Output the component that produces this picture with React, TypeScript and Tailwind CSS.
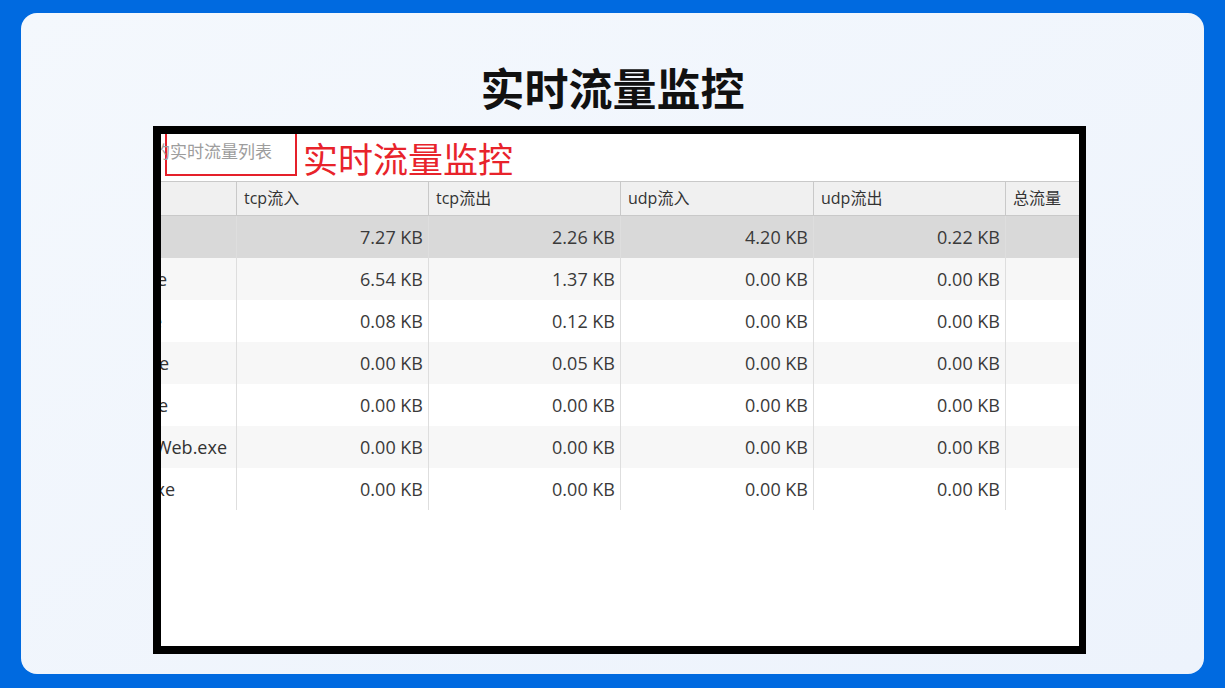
import React from "react";

const cjk = { fontFamily: '"Noto Sans CJK SC", "Noto Sans", sans-serif' };
const table = { fontFamily: '"Open Sans", "Noto Sans CJK SC", sans-serif' };

const headers = ["", "tcp流入", "tcp流出", "udp流入", "udp流出", "总流量"];

// the first column is scrolled off to the left, so only the tail of each name shows
const rows = [
  { name: "", pad: "pr-[69px]", cells: ["7.27 KB", "2.26 KB", "4.20 KB", "0.22 KB"] },
  { name: "chrome.exe", pad: "pr-[69px]", cells: ["6.54 KB", "1.37 KB", "0.00 KB", "0.00 KB"] },
  { name: "lsass.exe", pad: "pr-[74px]", cells: ["0.08 KB", "0.12 KB", "0.00 KB", "0.00 KB"] },
  { name: "clash.exe", pad: "pr-[67px]", cells: ["0.00 KB", "0.05 KB", "0.00 KB", "0.00 KB"] },
  { name: "wechat.exe", pad: "pr-[68px]", cells: ["0.00 KB", "0.00 KB", "0.00 KB", "0.00 KB"] },
  { name: "QQWeb.exe", pad: "pr-[9px]", cells: ["0.00 KB", "0.00 KB", "0.00 KB", "0.00 KB"] },
  { name: "steam.exe", pad: "pr-[61px]", cells: ["0.00 KB", "0.00 KB", "0.00 KB", "0.00 KB"] },
];

const cols = "grid grid-cols-[76px_192px_192px_193px_192px_1fr]";

function Header() {
  return (
    <div className={`${cols} h-[35px] bg-[#f0f0f0] border-y border-[#c9c9c9]`}>
      {headers.map((h, i) => (
        <div
          key={i}
          className="border-r border-[#c9c9c9] last:border-r-0 flex items-center pl-[7px] pb-[1px] text-[16px] text-[#333] whitespace-nowrap overflow-hidden"
        >
          {h}
        </div>
      ))}
    </div>
  );
}

function Row({ name, pad, cells, idx }: { name: string; pad: string; cells: string[]; idx: number }) {
  const bg = idx === 0 ? "bg-[#d9d9d9]" : idx % 2 === 1 ? "bg-[#f7f7f7]" : "bg-white";
  return (
    <div className={`${cols} h-[42px] ${bg}`}>
      <div className={`border-r border-[#dedede] overflow-hidden flex items-center justify-end ${pad}`}>
        <span className="shrink-0 whitespace-nowrap text-[18px] text-[#333]">{name}</span>
      </div>
      {cells.map((c, i) => (
        <div
          key={i}
          className="border-r border-[#dedede] flex items-center justify-end pr-[5px] text-[18px] text-[#3a3a3a]"
        >
          {c}
        </div>
      ))}
      <div />
    </div>
  );
}

export default function App() {
  return (
    <div className="w-[1225px] h-[688px] bg-[#006ae0] pt-[13px] pb-[14px] px-[21px]">
      <div className="h-full rounded-[16px] bg-gradient-to-br from-[#f4f8fd] to-[#edf3fc] flex flex-col">
        <h1
          className="mt-[52px] text-center text-[44px] leading-none font-bold text-[#111]"
          style={cjk}
        >
          实时流量监控
        </h1>
        <div className="mt-[17px] ml-[132px] w-[933px] h-[528px] border-[8px] border-r-[7px] border-black bg-white flex flex-col overflow-hidden">
          <div className="h-[47px] flex items-start" style={cjk}>
            <div className="ml-[4px] w-[132px] h-[42px] border-2 border-t-0 border-[#e5202a] flex items-center pb-[6px] overflow-visible">
              <span className="ml-[-14px] text-[17px] text-[#9d9d9d] whitespace-nowrap">的实时流量列表</span>
            </div>
            <span className="ml-[6px] mt-[4px] text-[35px] leading-[40px] text-[#e8232b] whitespace-nowrap">
              实时流量监控
            </span>
          </div>
          <div style={table}>
            <Header />
            {rows.map((r, i) => (
              <Row key={i} name={r.name} pad={r.pad} cells={r.cells} idx={i} />
            ))}
          </div>
        </div>
      </div>
    </div>
  );
}
